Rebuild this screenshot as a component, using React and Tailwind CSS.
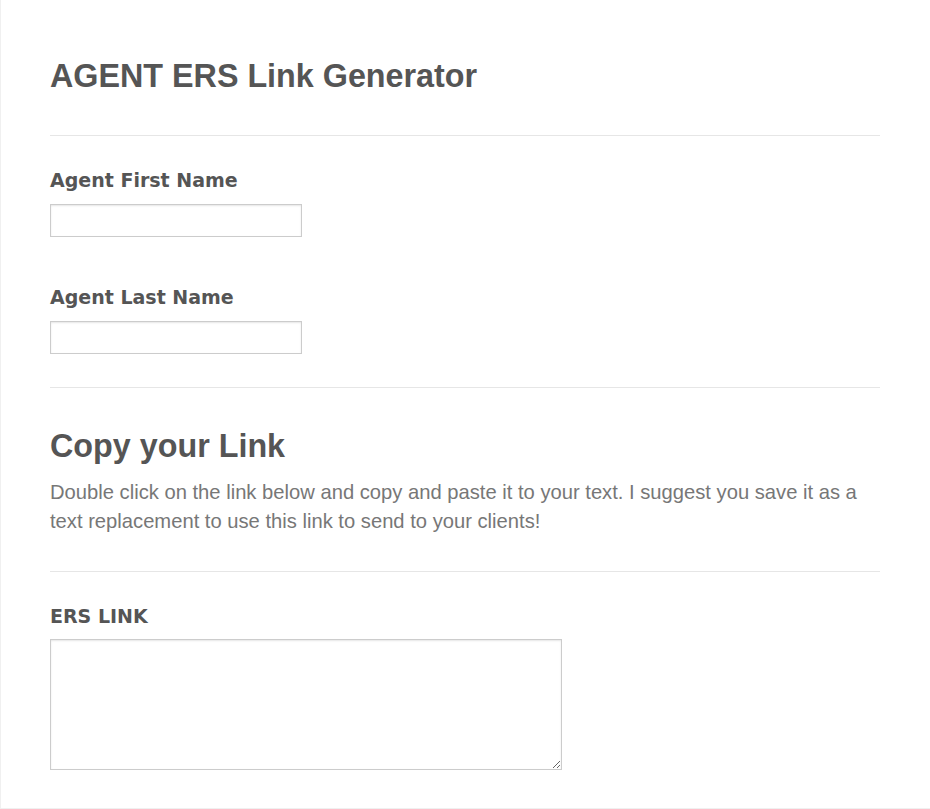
const labelFont = { fontFamily: 'Verdana, "DejaVu Sans", sans-serif' };

const Field = ({ label, className = '' }) => (
    <div className={className}>
        <label className="block text-[19px] leading-[24px] font-bold text-[#555]" style={labelFont}>{label}</label>
        <input
            type="text"
            className="mt-[12px] block w-[252px] h-[33px] border border-[#ccc] shadow-[inset_0_1px_2px_rgba(0,0,0,0.1)] bg-white px-2 focus:outline-none"
        />
    </div>
);

const App = () => {
    return (
        <div className="min-h-screen bg-white font-['Liberation_Sans',Arial,sans-serif]">
            <div className="border-l border-b border-[#f0f0f0] pl-[49px] pr-[50px] pt-[56px] pb-[38px]">
                <h1 className="text-[32.3px] leading-[40px] font-bold text-[#555]">AGENT ERS Link Generator</h1>
                <hr className="mt-[39px] border-t border-[#e6e6e6]" />

                <Field label="Agent First Name" className="mt-[32px]" />
                <Field label="Agent Last Name" className="mt-[48px]" />

                <hr className="mt-[33px] border-t border-[#e6e6e6]" />

                <h2 className="mt-[38px] text-[32.3px] leading-[40px] font-bold text-[#555]">Copy your Link</h2>
                <p className="mt-[12px] text-[20.2px] leading-[29px] text-[#777]">
                    Double click on the link below and copy and paste it to your text. I suggest you save it as a text replacement to use this link to send to your clients!
                </p>

                <hr className="mt-[35px] border-t border-[#e6e6e6]" />

                <div className="mt-[32px]">
                    <label className="block text-[19px] leading-[24px] font-bold text-[#555]" style={labelFont}>ERS LINK</label>
                    <textarea
                        className="mt-[11px] block w-[512px] h-[131px] border border-[#ccc] shadow-[inset_0_1px_2px_rgba(0,0,0,0.1)] bg-white p-2 focus:outline-none"
                    />
                </div>
            </div>
        </div>
    );
};

export default App;
